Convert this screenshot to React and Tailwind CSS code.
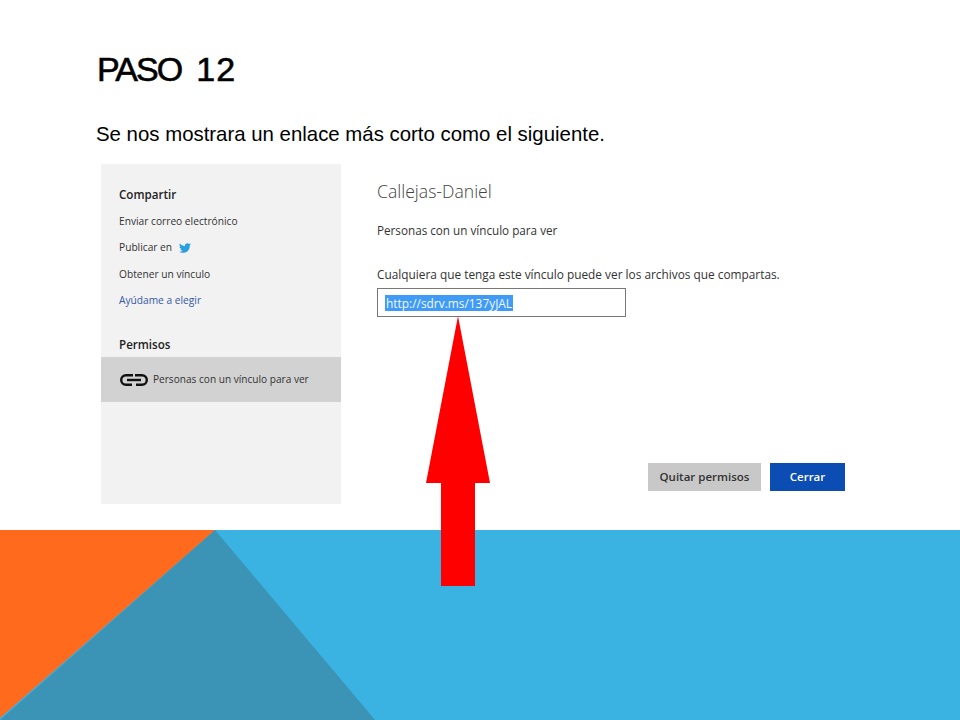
import React from "react";
import { FaTwitter } from "react-icons/fa";

const sans = "font-['Liberation_Sans',Arial,sans-serif]";
const ui = "font-['Open_Sans','Noto_Sans',sans-serif]";

function SideItem({ children, className = "" }) {
  return <div className={`h-[26.5px] flex items-center text-[10.2px] text-[#333] ${className}`}>{children}</div>;
}

export default function App() {
  return (
    <div className={`relative w-[960px] h-[720px] bg-white overflow-hidden flex flex-col ${ui}`}>
      <div className="h-[164px] pl-[97px] shrink-0 flex flex-col">
        <h1 className={`mt-[48px] h-[42px] flex items-center gap-[15px] text-[34px] leading-none text-black font-normal whitespace-pre ${sans} [-webkit-text-stroke:0.6px_black]`}>
          <span className="tracking-[-1.9px]">PASO</span>
          <span className="tracking-[1px]">12</span>
        </h1>
        <p className={`mt-[32px] -ml-[1px] text-[20.4px] leading-[24px] text-black whitespace-nowrap ${sans}`}>Se nos mostrara un enlace más corto como el siguiente.</p>
      </div>

      <div className="h-[340px] ml-[101px] shrink-0 flex">
        <aside className="w-[240px] h-full bg-[#f2f2f2] flex flex-col">
          <div className="pl-[18px] pt-[22px]">
            <div className="text-[11.6px] leading-[18px] font-semibold text-[#222] mb-[4px]">Compartir</div>
            <SideItem>Enviar correo electrónico</SideItem>
            <SideItem>
              Publicar en
              <FaTwitter className="ml-[7px] text-[#2a9fe0] text-[12px]" />
            </SideItem>
            <SideItem>Obtener un vínculo</SideItem>
            <SideItem className="!text-[#3558a8]">Ayúdame a elegir</SideItem>
            <div className="mt-[22px] text-[11.6px] leading-[18px] font-semibold text-[#222]">Permisos</div>
          </div>
          <div className="mt-[3px] h-[45px] bg-[#d2d2d2] pl-[18px] flex items-center gap-[4px] text-[10.1px] text-[#333]">
            <svg width="30" height="14" viewBox="0 0 30 14" fill="none" stroke="#111" strokeWidth="2.4">
              <path d="M14 2.2H7a4.8 4.8 0 0 0 0 9.6h6" />
              <path d="M16 2.2h7a4.8 4.8 0 0 1 0 9.6h-6" />
              <path d="M8 7h14" />
            </svg>
            <span>Personas con un vínculo para ver</span>
          </div>
        </aside>

        <main className="pl-[36px] pt-[15px] flex-1 flex flex-col">
          <h2 className="text-[17.6px] leading-[24px] font-light text-[#444]">Callejas-Daniel</h2>
          <p className="mt-[19px] text-[11.7px] leading-[16px] text-[#333]">Personas con un vínculo para ver</p>
          <p className="mt-[28px] text-[11.85px] leading-[16px] text-[#333] whitespace-nowrap">Cualquiera que tenga este vínculo puede ver los archivos que compartas.</p>
          <div className="mt-[6px] w-[249px] h-[29px] border border-[#777] flex items-center pl-[7px]">
            <span className="bg-[#3f9bf5] text-[#f4f8ff] text-[11.9px] leading-[16px] px-[1px]">http://sdrv.ms/137yJAL</span>
          </div>
          <div className="mt-[146px] ml-[271px] flex gap-[9px] text-[11.5px] font-semibold">
            <button className="w-[113px] h-[28px] bg-[#c8c8c8] text-[#333]">Quitar permisos</button>
            <button className="w-[75px] h-[28px] bg-[#0b4db3] text-white">Cerrar</button>
          </div>
        </main>
      </div>

      <div className="mt-[26px] h-[190px] shrink-0 bg-[#3ab2e2]">
        <svg width="960" height="190" viewBox="0 0 960 190" className="block">
          <polygon points="0,0 215,0 0,188" fill="#ff6a1d" />
          <polygon points="215,0 375,190 0,190" fill="#3b94b5" />
        </svg>
      </div>

      <svg className="absolute left-[420px] top-[310px]" width="76" height="280" viewBox="420 310 76 280">
        <polygon points="458,316 490,483 475,483 475,586 441,586 441,483 426,483" fill="#ff0000" />
      </svg>
    </div>
  );
}
